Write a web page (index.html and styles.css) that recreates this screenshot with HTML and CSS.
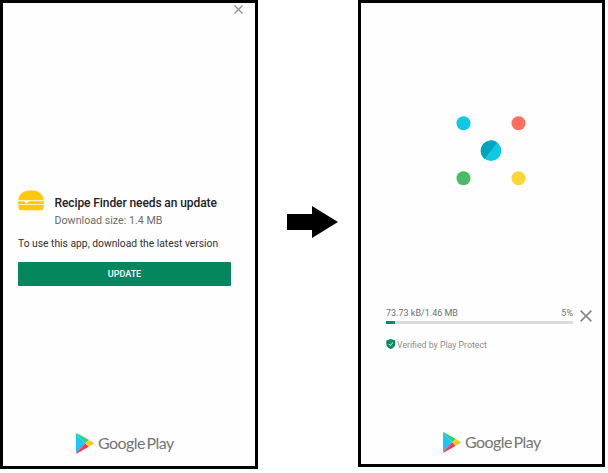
FILE: index.html
```html
<!DOCTYPE html>
<html lang="en">
<head>
<meta charset="utf-8">
<title>Recipe Finder update</title>
<link rel="stylesheet" href="styles.css">
</head>
<body>
<main class="flow">
  <section class="screen prompt">
    <svg class="close" width="11" height="11" viewBox="0 0 11 11"><path d="M1.5 1.5l8 8M9.5 1.5l-8 8"/></svg>
    <header class="app">
      <svg class="burger" width="26" height="21" viewBox="0 0 26 21">
        <path d="M.4 10.2C.4 4.2 5.5.2 13 .2s12.600 4 12.600 10z"/>
        <path d="M0 11.200h6.300l2.200 2.200 2.200-2.200H26v3H0z"/>
        <path d="M.4 15.100h25.200v2.100c0 2-1.200 3.100-3.200 3.100H3.600c-2 0-3.200-1.100-3.200-3.100z"/>
        <path class="notch" d="M6.500 11h4.200l-2.100 2.100z"/>
      </svg>
      <div>
        <h1 class="title">Recipe Finder needs an update</h1>
        <p class="size">Download size: 1.4 MB</p>
      </div>
    </header>
    <p class="message">To use this app, download the latest version</p>
    <button class="update">UPDATE</button>
    <footer class="brand">
      <svg width="18" height="21" viewBox="0 0 18 21">
        <path fill="#19c8f5" d="M0 .5v19.500L9.300 10.300z"/>
        <path fill="#20d681" d="M0 .4C.4.1.8.1 1.300.4L12.800 6.900 9.300 10.300z"/>
        <path fill="#f23b56" d="M0 20c.3.500.8.500 1.300.2l11.500-6.500-3.500-3.400z"/>
        <path fill="#ffc917" d="M12.800 6.900l4.200 2.400c.9.500.9 1.400 0 1.900l-4.200 2.500-3.500-3.400z"/>
      </svg>
      <span class="wordmark">Google Play</span>
    </footer>
  </section>

  <svg class="arrow" width="51" height="32" viewBox="0 0 51 32"><path d="M0 8h25V0l26 16-26 16v-8H0z"/></svg>

  <section class="screen progress">
    <svg class="dots" width="70" height="70" viewBox="0 0 70 70">
      <circle cx="7.500" cy="7.300" r="7" fill="#0fc8e3"/>
      <circle cx="62.500" cy="7.300" r="7" fill="#ff6f5e"/>
      <circle cx="7.500" cy="62.200" r="7" fill="#4bba68"/>
      <circle cx="62.500" cy="62.200" r="7" fill="#fdd635"/>
      <circle cx="35" cy="34.700" r="10.300" fill="#0fc8e3"/>
      <path fill="#00a5bd" d="M28.700 42.900A10.300 10.300 0 0 1 41.300 26.500z"/>
    </svg>
    <div class="download">
      <div class="status">
        <div class="figures"><span>73.73 kB/1.46 MB</span><span class="percent">5%</span></div>
        <div class="track"><div class="bar" style="width:5%"></div></div>
      </div>
      <svg class="cancel" width="12" height="12" viewBox="0 0 12 12"><path d="M.6.6l10.800 10.800M11.400.6L.6 11.400"/></svg>
    </div>
    <p class="verified">
      <svg width="10" height="10" viewBox="0 0 10 10"><path fill="#078b62" d="M4.800 0l4.500 1.600v3.100c0 2.500-1.900 4.400-4.500 5.300C2.200 9.100.3 7.200.3 4.700V1.600z"/><path class="check" d="M2.700 4.900l1.500 1.500 2.900-2.900"/></svg>
      <span>Verified by Play Protect</span>
    </p>
    <footer class="brand">
      <svg width="18" height="21" viewBox="0 0 18 21">
        <path fill="#19c8f5" d="M0 .5v19.500L9.300 10.300z"/>
        <path fill="#20d681" d="M0 .4C.4.1.8.1 1.300.4L12.800 6.900 9.300 10.300z"/>
        <path fill="#f23b56" d="M0 20c.3.500.8.500 1.300.2l11.500-6.500-3.500-3.400z"/>
        <path fill="#ffc917" d="M12.800 6.900l4.200 2.400c.9.500.9 1.400 0 1.900l-4.200 2.500-3.500-3.400z"/>
      </svg>
      <span class="wordmark">Google Play</span>
    </footer>
  </section>
</main>
</body>
</html>
```
FILE: styles.css
```css
* { box-sizing: border-box; }
body { margin: 0; background: #fff; font-family: Roboto, "Liberation Sans", sans-serif; overflow: hidden; }
h1, p { margin: 0; }
svg { display: block; flex: none; }

.flow { display: flex; align-items: flex-start; width: 608px; height: 473px; }
.screen { display: flex; flex-direction: column; flex: none; border: 3px solid #000; background: #fefefe; }
.prompt { width: 258px; height: 469px; padding: 1px 24px 0 15px; }
.progress { width: 247px; height: 467px; margin-left: 20px; padding: 0 9px 0 25px; }

.close { align-self: flex-end; margin-right: -13px; }
.close path, .cancel path { fill: none; stroke: #929292; stroke-width: 1.3; }
.cancel path { stroke: #858585; stroke-width: 1.5; }

.app { display: flex; gap: 10.500px; margin-top: 175px; }
.burger { fill: #ffc80a; }
.notch { fill: #fefefe; }
.title { margin-top: 6px; font-size: 12px; line-height: 14px; font-weight: 500; letter-spacing: -.09px; color: #202124; white-space: nowrap; }
.size { margin-top: 4px; font-size: 10.700px; line-height: 14px; color: #6b6b6b; }
.message { margin-top: 9px; font-size: 10.300px; line-height: 14px; color: #303030; white-space: nowrap; }
.update { width: 213px; height: 24px; margin-top: 11px; padding: 0; border: 0; border-radius: 1px; background: #04875f; color: #fff; font: 500 9px/24px Roboto, sans-serif; }

.brand { display: flex; margin-top: auto; }
.prompt .brand { margin-left: 58px; padding-bottom: 12px; }
.progress .brand { margin-left: 57px; padding-bottom: 11px; }
.wordmark { margin-left: 4px; font: 16px/20px Lato, sans-serif; letter-spacing: -.55px; word-spacing: -2px; color: #757575; white-space: nowrap; }

.arrow { margin: 206px 0 0 29px; }

.dots { margin: 113px 0 0 70px; }
.download { display: flex; margin-top: 121px; }
.status { width: 187px; }
.figures { display: flex; justify-content: space-between; font-size: 9px; line-height: 12px; color: #6f6f6f; }
.track { height: 3px; margin-top: 2px; border-radius: 1px; background: #dadada; }
.bar { height: 3px; background: #078b62; }
.cancel { margin: 3px 0 0 7px; }
.verified { display: flex; margin-top: 15px; font-size: 8.750px; line-height: 12px; color: #8d8d8d; }
.verified svg { margin-right: 1px; }
.check { fill: none; stroke: #fff; stroke-width: 1; }
```
